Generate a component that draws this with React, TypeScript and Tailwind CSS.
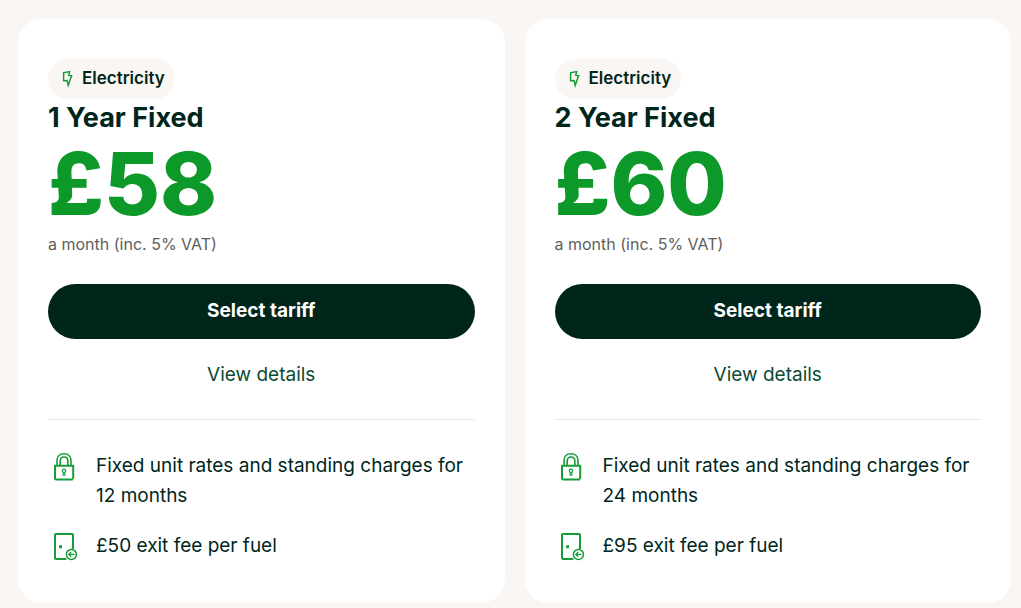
import React from "react";

type Tariff = {
  name: string;
  price: string;
  term: string;
  exitFee: string;
};

const tariffs: Tariff[] = [
  { name: "1 Year Fixed", price: "£58", term: "12 months", exitFee: "£50" },
  { name: "2 Year Fixed", price: "£60", term: "24 months", exitFee: "£95" },
];

const BoltIcon = () => (
  <svg viewBox="0 0 12 18" className="h-[18px] w-3" fill="none" stroke="#169c37" strokeWidth="1.5" aria-hidden="true">
    <path d="M1.6 2.8 L7.6 1.6 L6.8 5.4 L9.6 5.6 L6.2 15.4 L5.1 10.6 L1.6 10.8 Z" />
  </svg>
);

const LockIcon = () => (
  <svg viewBox="0 0 32 32" className="size-8 shrink-0" fill="none" stroke="#169c37" strokeWidth="2" aria-hidden="true">
    <path d="M25.2 27 V14.8 H7 V27.2 Q7 28.4 8.2 28.4 H24.2" strokeLinecap="round" strokeLinejoin="round" />
    <path d="M9 14 V9.4 C9 5.4 11.8 2.7 16 2.7 S23 5.4 23 9.4 V14" strokeWidth="1.6" />
    <path d="M12.2 14 V9.8 C12.2 7.4 13.6 6 16 6 S19.8 7.4 19.8 9.8 V14" strokeWidth="1.6" />
    <circle cx="16" cy="19.8" r="1.7" strokeWidth="1.2" />
    <path d="M15.3 21.4 L15 24.2 H17 L16.7 21.4" strokeWidth="1.1" />
  </svg>
);

const DoorIcon = () => (
  <svg viewBox="0 1 32 32" className="size-8 shrink-0" fill="none" stroke="#169c37" strokeWidth="2" aria-hidden="true">
    <path d="M17.6 29 H8 Q7 29 7 28 V5 Q7 4 8 4 H24 Q25 4 25 5 V18.6" strokeLinecap="round" />
    <path d="M11 15.4 L14 15 V18.2 L11.2 18.2 Z" fill="#169c37" stroke="none" />
    <circle cx="23.4" cy="24.4" r="5" strokeWidth="1.5" />
    <path d="M26.4 24.4 H21 M23.2 22 L20.8 24.4 L23.2 26.8" strokeWidth="1.3" />
  </svg>
);

const TariffCard = ({ tariff }: { tariff: Tariff }) => {
  return (
    <article className="rounded-3xl bg-white px-[30px] pt-10 pb-10">
      <div className="flex h-10 w-fit items-center gap-2 rounded-full bg-[#faf6f3] pr-2.5 pl-3.5 text-[17px] font-semibold">
        <BoltIcon />
        Electricity
      </div>
      <h2 className="text-[27px] leading-[38px] font-bold">{tariff.name}</h2>
      <p className="text-[86px] leading-[95px] font-extrabold text-[#0c9929]">{tariff.price}</p>
      <p className="text-base leading-6 text-[#5f5e5a]">a month (inc. 5% VAT)</p>
      <button type="button" className="mt-7 h-[55px] w-full rounded-full bg-[#00261c] text-[19px] font-bold text-white">
        Select tariff
      </button>
      <a href="#details" className="mt-5 block text-center text-[19px] leading-8 text-[#0b4a34]">
        View details
      </a>
      <hr className="mt-7 border-[#e4e6e5]" />
      <ul className="mt-[31px] space-y-5 text-[19px] leading-[30px]">
        <li className="flex gap-4">
          <LockIcon />
          <span>{`Fixed unit rates and standing charges for ${tariff.term}`}</span>
        </li>
        <li className="flex gap-4">
          <DoorIcon />
          <span>{`${tariff.exitFee} exit fee per fuel`}</span>
        </li>
      </ul>
    </article>
  );
};

const App = () => {
  return (
    <main className="min-h-screen bg-[#faf6f3] pt-[19px] pr-2.5 pl-[18px] font-['Inter',sans-serif] text-[#00261c]">
      <div className="grid grid-cols-2 items-start gap-5">
        {tariffs.map((tariff) => (
          <TariffCard key={tariff.name} tariff={tariff} />
        ))}
      </div>
    </main>
  );
};

export default App;
